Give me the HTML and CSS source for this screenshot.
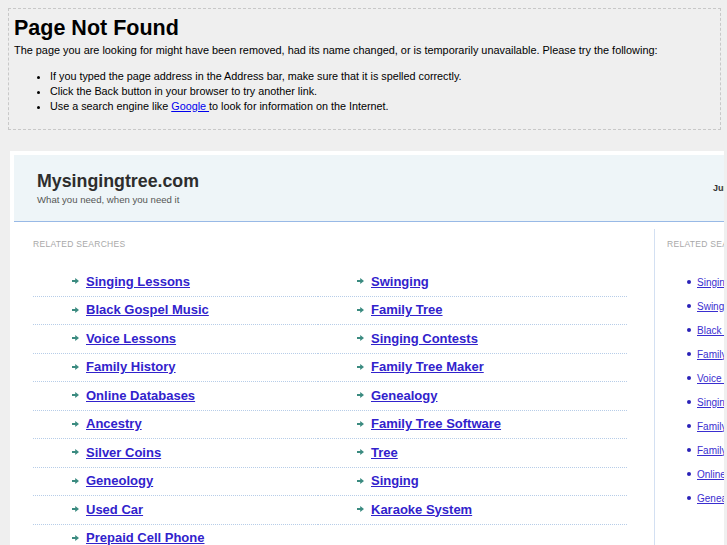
FILE: index.html
```html
<!DOCTYPE html>
<html>
<head>
<meta charset="utf-8">
<title>Page Not Found</title>
<link rel="stylesheet" href="styles.css">
</head>
<body>
<div class="notfound">
  <h1>Page Not Found</h1>
  <p>The page you are looking for might have been removed, had its name changed, or is temporarily unavailable. Please try the following:</p>
  <ul>
    <li>If you typed the page address in the Address bar, make sure that it is spelled correctly.</li>
    <li>Click the Back button in your browser to try another link.</li>
    <li>Use a search engine like <a href="#">Google </a> to look for information on the Internet.</li>
  </ul>
</div>

<div class="panel">
  <div class="wrap">
    <div class="header">
      <div class="brand">
        <div class="title">Mysingingtree.com</div>
        <div class="tagline">What you need, when you need it</div>
      </div>
      <div class="jump">Jump to:</div>
    </div>
    <div class="body">
      <div class="main">
        <div class="label">RELATED SEARCHES</div>
        <div class="cols">
          <ul class="links">
            <li><span class="arrow"><svg width="7" height="6" viewBox="0 0 7 6"><path d="M0 2h3.2V0L7 3 3.2 6V4H0z"/></svg></span><a href="#">Singing Lessons</a></li>
            <li><span class="arrow"><svg width="7" height="6" viewBox="0 0 7 6"><path d="M0 2h3.2V0L7 3 3.2 6V4H0z"/></svg></span><a href="#">Black Gospel Music</a></li>
            <li><span class="arrow"><svg width="7" height="6" viewBox="0 0 7 6"><path d="M0 2h3.2V0L7 3 3.2 6V4H0z"/></svg></span><a href="#">Voice Lessons</a></li>
            <li><span class="arrow"><svg width="7" height="6" viewBox="0 0 7 6"><path d="M0 2h3.2V0L7 3 3.2 6V4H0z"/></svg></span><a href="#">Family History</a></li>
            <li><span class="arrow"><svg width="7" height="6" viewBox="0 0 7 6"><path d="M0 2h3.2V0L7 3 3.2 6V4H0z"/></svg></span><a href="#">Online Databases</a></li>
            <li><span class="arrow"><svg width="7" height="6" viewBox="0 0 7 6"><path d="M0 2h3.2V0L7 3 3.2 6V4H0z"/></svg></span><a href="#">Ancestry</a></li>
            <li><span class="arrow"><svg width="7" height="6" viewBox="0 0 7 6"><path d="M0 2h3.2V0L7 3 3.2 6V4H0z"/></svg></span><a href="#">Silver Coins</a></li>
            <li><span class="arrow"><svg width="7" height="6" viewBox="0 0 7 6"><path d="M0 2h3.2V0L7 3 3.2 6V4H0z"/></svg></span><a href="#">Geneology</a></li>
            <li><span class="arrow"><svg width="7" height="6" viewBox="0 0 7 6"><path d="M0 2h3.2V0L7 3 3.2 6V4H0z"/></svg></span><a href="#">Used Car</a></li>
            <li><span class="arrow"><svg width="7" height="6" viewBox="0 0 7 6"><path d="M0 2h3.2V0L7 3 3.2 6V4H0z"/></svg></span><a href="#">Prepaid Cell Phone</a></li>
          </ul>
          <ul class="links">
            <li><span class="arrow"><svg width="7" height="6" viewBox="0 0 7 6"><path d="M0 2h3.2V0L7 3 3.2 6V4H0z"/></svg></span><a href="#">Swinging</a></li>
            <li><span class="arrow"><svg width="7" height="6" viewBox="0 0 7 6"><path d="M0 2h3.2V0L7 3 3.2 6V4H0z"/></svg></span><a href="#">Family Tree</a></li>
            <li><span class="arrow"><svg width="7" height="6" viewBox="0 0 7 6"><path d="M0 2h3.2V0L7 3 3.2 6V4H0z"/></svg></span><a href="#">Singing Contests</a></li>
            <li><span class="arrow"><svg width="7" height="6" viewBox="0 0 7 6"><path d="M0 2h3.2V0L7 3 3.2 6V4H0z"/></svg></span><a href="#">Family Tree Maker</a></li>
            <li><span class="arrow"><svg width="7" height="6" viewBox="0 0 7 6"><path d="M0 2h3.2V0L7 3 3.2 6V4H0z"/></svg></span><a href="#">Genealogy</a></li>
            <li><span class="arrow"><svg width="7" height="6" viewBox="0 0 7 6"><path d="M0 2h3.2V0L7 3 3.2 6V4H0z"/></svg></span><a href="#">Family Tree Software</a></li>
            <li><span class="arrow"><svg width="7" height="6" viewBox="0 0 7 6"><path d="M0 2h3.2V0L7 3 3.2 6V4H0z"/></svg></span><a href="#">Tree</a></li>
            <li><span class="arrow"><svg width="7" height="6" viewBox="0 0 7 6"><path d="M0 2h3.2V0L7 3 3.2 6V4H0z"/></svg></span><a href="#">Singing</a></li>
            <li><span class="arrow"><svg width="7" height="6" viewBox="0 0 7 6"><path d="M0 2h3.2V0L7 3 3.2 6V4H0z"/></svg></span><a href="#">Karaoke System</a></li>
          </ul>
        </div>
      </div>
      <div class="side">
        <div class="label">RELATED SEARCHES</div>
        <ul class="sidelinks">
          <li><a href="#">Singing Lessons</a></li>
          <li><a href="#">Swinging</a></li>
          <li><a href="#">Black Gospel Music</a></li>
          <li><a href="#">Family History</a></li>
          <li><a href="#">Voice Lessons</a></li>
          <li><a href="#">Singing Contests</a></li>
          <li><a href="#">Family Tree</a></li>
          <li><a href="#">Family Tree Maker</a></li>
          <li><a href="#">Online Databases</a></li>
          <li><a href="#">Genealogy</a></li>
        </ul>
      </div>
    </div>
  </div>
</div>
</body>
</html>
```

FILE: styles.css
```css
html, body {
  margin: 0;
  padding: 0;
}
body {
  background: #efefef;
  font-family: "Liberation Sans", Arial, sans-serif;
  color: #000;
  height: 545px;
  overflow: hidden;
}
.notfound {
  margin: 8px 6px 0 8px;
  border: 1px dashed #c8c8c8;
  height: 120px;
  padding: 0 5px;
  box-sizing: content-box;
}
.notfound h1 {
  font-size: 21.5px;
  font-weight: bold;
  margin: 6px 0 0 0;
  line-height: 26px;
}
.notfound p {
  font-size: 10.9px;
  margin: 2px 0 0 0;
  line-height: 14px;
}
.notfound ul {
  margin: 12px 0 0 0;
  padding-left: 36px;
  font-size: 10.8px;
  line-height: 15px;
}
.notfound a {
  color: #0000ee;
}
.panel {
  margin: 21px 3px 0 10px;
  background: #fff;
  padding: 4px 0 0 4px;
  overflow: hidden;
  height: 400px;
}
.wrap {
  width: 960px;
}
.header {
  display: flex;
  align-items: center;
  background: #eef5f8;
  height: 66px;
  border-bottom: 1px solid #98b9e6;
  padding-left: 23px;
}
.brand {
  width: 676px;
  padding-top: 1px;
}
.title {
  font-size: 17.8px;
  font-weight: bold;
  color: #2d2d2d;
  line-height: 22px;
}
.tagline {
  font-size: 9.6px;
  color: #555;
  line-height: 14px;
  margin-top: 1px;
}
.jump {
  font-size: 9px;
  font-weight: bold;
  color: #333;
}
.body {
  display: flex;
}
.main {
  width: 621px;
  padding: 16px 0 0 19px;
}
.label {
  font-size: 8.5px;
  color: #a8a8a8;
  letter-spacing: 0.3px;
  line-height: 12px;
}
.cols {
  display: grid;
  grid-template-columns: 285px 309px;
  margin-top: 18px;
}
.links {
  list-style: none;
  margin: 0;
  padding: 0;
}
.links li {
  display: flex;
  align-items: center;
  height: 16px;
  padding: 5px 0 6.5px 39px;
  border-bottom: 1px dotted #b7cde8;
}
.arrow {
  width: 14px;
  display: flex;
  align-items: center;
}
.arrow svg {
  fill: #3b8b80;
  display: block;
}
.links a {
  color: #3122cc;
  font-size: 13px;
  font-weight: bold;
}
.side {
  margin-top: 7px;
  border-left: 1px solid #d3e0f2;
  padding: 9px 0 0 12px;
  width: 300px;
  height: 320px;
}
.sidelinks {
  list-style: none;
  margin: 20px 0 0 0;
  padding: 0 0 0 20px;
}
.sidelinks li {
  display: flex;
  align-items: center;
  height: 24px;
}
.sidelinks li::before {
  content: "";
  width: 4px;
  height: 4px;
  border-radius: 50%;
  background: #2a22b8;
  margin-right: 6px;
}
.sidelinks a {
  color: #3a2ed0;
  font-size: 10px;
}
```
